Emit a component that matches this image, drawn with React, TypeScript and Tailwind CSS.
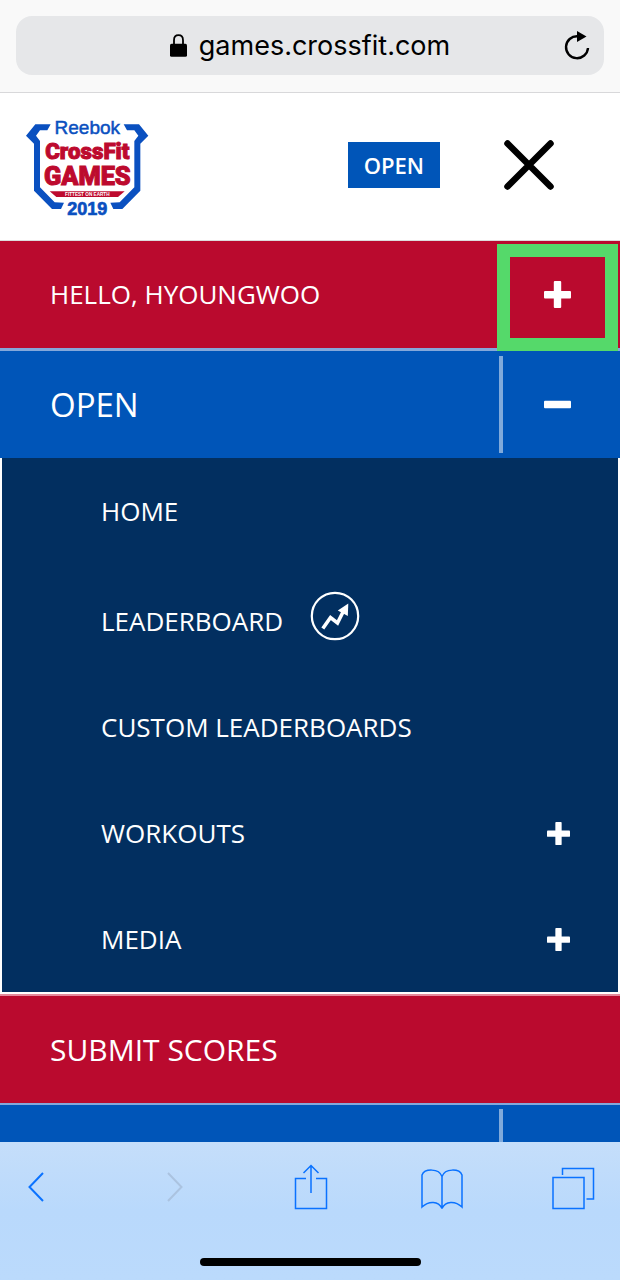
import clsx from "clsx";
import type { ReactNode } from "react";

type SubItem = {
  label: string;
  trending?: boolean;
  expandable?: boolean;
};

const SUB_ITEMS: SubItem[] = [
  { label: "HOME" },
  { label: "LEADERBOARD", trending: true },
  { label: "CUSTOM LEADERBOARDS" },
  { label: "WORKOUTS", expandable: true },
  { label: "MEDIA", expandable: true },
];

function LockIcon() {
  return (
    <svg aria-hidden="true" viewBox="0 0 17 23" className="h-[23px] w-[17px]">
      <path d="M4 11V6.2C4 3 5.8 1.2 8.5 1.2S13 3 13 6.2V11" fill="none" stroke="#000" strokeWidth="1.8" />
      <rect x="0" y="9.8" width="17" height="13" rx="1.6" />
    </svg>
  );
}

function ReloadIcon() {
  return (
    <svg aria-hidden="true" viewBox="0 0 26 29" className="h-[29px] w-[26px]">
      <path d="M13.6 5.2A11 11 0 1 0 24 17" fill="none" stroke="#000" strokeWidth="2.4" />
      <path d="M13 0l9.5 5.6L13 11z" />
    </svg>
  );
}

function GamesLogo() {
  return (
    <svg
      role="img"
      aria-label="Reebok CrossFit Games 2019"
      viewBox="48 6 369 348"
      className="h-[116px] w-[123px]"
    >
      <g fill="#0a50c0">
        <path d="M122 58H76L48 92L72 116V257L126 312H153L162 293L134 292L90 247V108L78 92L90 76H112Z" />
        <path d="M341 58H387L415 92L391 116V257L337 312H310L301 293L329 292L373 247V108L385 92L373 76H351Z" />
      </g>
      <g fontFamily="'Liberation Sans', Arial, sans-serif" textAnchor="middle">
        <text x="232" y="87" fontSize="57" fill="#0a50c0" stroke="#0a50c0" strokeWidth="1.5">
          Reebok
        </text>
        <g
          fontFamily="Roboto, 'Liberation Sans', sans-serif"
          fontWeight="900"
          fill="#bd0a2e"
          stroke="#bd0a2e"
          strokeWidth="3"
        >
          <text x="232" y="162" fontSize="67">
            CrossFit
          </text>
          <text x="232" y="240" fontSize="76">
            GAMES
          </text>
        </g>
        <path d="M119 259H344L324 276H139Z" fill="#bd0a2e" />
        <text x="232" y="272" fontSize="14" fontWeight="700" fill="#fff">
          FITTEST ON EARTH
        </text>
        <text x="232" y="331" fontSize="54" fontWeight="700" fill="#0a50c0" stroke="#0a50c0" strokeWidth="2">
          2019
        </text>
      </g>
    </svg>
  );
}

function PlusIcon({ className }: { className?: string }) {
  return (
    <svg aria-hidden="true" viewBox="0 0 27 27" fill="#fff" className={className}>
      <rect x="0" y="10" width="27" height="7.4" rx="1" />
      <rect x="9.8" y="0" width="7.4" height="27" rx="1" />
    </svg>
  );
}

function MinusIcon() {
  return (
    <svg aria-hidden="true" viewBox="0 0 27 27" fill="#fff" className="size-[27px]">
      <rect x="0" y="9.8" width="27" height="7.4" rx="1" />
    </svg>
  );
}

function TrendingIcon() {
  return (
    <svg aria-hidden="true" viewBox="0 0 50 50" className="size-[50px]">
      <circle cx="25" cy="25" r="23.2" fill="none" stroke="#fff" strokeWidth="2.2" />
      <path d="M12.8 37.5L20.5 26.5L27.500 32L33.500 20" fill="none" stroke="#fff" strokeWidth="3.600" />
      <path d="M38.3 12.5L37.8 25L27.8 19.4Z" fill="#fff" />
    </svg>
  );
}

function Row({ children, className }: { children?: ReactNode; className?: string }) {
  return <div className={clsx("flex items-stretch text-white", className)}>{children}</div>;
}

function ToolbarButton({
  label,
  disabled,
  className,
  children,
}: {
  label: string;
  disabled?: boolean;
  className: string;
  children: ReactNode;
}) {
  return (
    <button
      type="button"
      aria-label={label}
      disabled={disabled}
      className={clsx("flex h-12 items-center justify-center", className)}
    >
      {children}
    </button>
  );
}

function Toolbar() {
  return (
    <footer className="bg-linear-to-b from-[#c5defa] via-[#b9d9fc] to-[#bbdafc] px-[10px] pt-[21px] pb-[14px]">
      <div className="flex items-center justify-between pr-[15px] text-[#0a72ff]">
        <ToolbarButton label="Back" className="w-[52px]">
          <svg viewBox="0 0 16 30" className="h-[30px] w-4" fill="none" stroke="currentColor" strokeWidth="2">
            <path d="M15 1L1.5 15L15 29" />
          </svg>
        </ToolbarButton>
        <ToolbarButton label="Forward" disabled className="w-[52px] text-[#abc3e0]">
          <svg viewBox="0 0 16 30" className="h-[30px] w-4" fill="none" stroke="currentColor" strokeWidth="2">
            <path d="M1 1L14.5 15L1 29" />
          </svg>
        </ToolbarButton>
        <ToolbarButton label="Share" className="w-11">
          <svg viewBox="0 0 34 46" className="h-[46px] w-[34px]" fill="none" stroke="currentColor" strokeWidth="1.5">
            <path d="M12 14.5H1.5V44.5H32.5V14.5H22" />
            <path d="M17 29V2M9.5 9L17 1.5L24.5 9" />
          </svg>
        </ToolbarButton>
        <ToolbarButton label="Bookmarks" className="w-11">
          <svg viewBox="0 0 42 46" className="h-[46px] w-[42px]" fill="none" stroke="currentColor" strokeWidth="1.5">
            <path d="M21 44.5C17.5 37 8 36.5 1 43V11C3.5 4.5 18 4 21 12.5C24 4 38.5 4.5 41 11V43C34 36.5 24.5 37 21 44.5V12.5" />
          </svg>
        </ToolbarButton>
        <ToolbarButton label="Tabs" className="w-11">
          <svg viewBox="0 0 43 46" className="h-[46px] w-[43px]" fill="none" stroke="currentColor" strokeWidth="1.5">
            <rect x="1" y="13.5" width="31" height="31" />
            <path d="M10.5 11V4.5H41.5V35H34.5" />
          </svg>
        </ToolbarButton>
      </div>
      <div className="mx-auto mt-[47px] h-2 w-[221px] rounded-full bg-black" />
    </footer>
  );
}

export default function App() {
  return (
    <div className="flex min-h-screen flex-col bg-white font-['Open_Sans',sans-serif]">
      <div className="border-b border-[#d8d8da] bg-[#f9f9f9] px-4 pt-4 pb-[17px]">
        <div className="flex h-[59px] items-center rounded-2xl bg-[#e6e7e9] px-[14px]">
          <div className="w-[26px]" />
          <button
            type="button"
            className="flex flex-1 items-center justify-center gap-3 font-['Inter',sans-serif] text-[27px] leading-8 text-black"
          >
            <LockIcon />
            games.crossfit.com
          </button>
          <button type="button" aria-label="Reload">
            <ReloadIcon />
          </button>
        </div>
      </div>

      <header className="flex items-center border-b border-[#dcdcdc] pt-[14px] pr-[66px] pb-[17px] pl-[26px]">
        <a href="#home">
          <GamesLogo />
        </a>
        <a
          href="#open"
          className="ml-auto bg-[#0055b8] px-4 py-2 text-[22px] leading-[30px] font-semibold text-white"
        >
          OPEN
        </a>
        <button type="button" aria-label="Close menu" className="ml-16">
          <svg viewBox="0 0 50 50" className="size-[50px]" stroke="#000" strokeWidth="6.5" strokeLinecap="round">
            <path d="M3.5 3.5L46.5 46.5M46.5 3.5L3.5 46.5" />
          </svg>
        </button>
      </header>

      <nav className="flex flex-1 flex-col">
        <Row className="relative h-[107px] bg-[#ba0a2e]">
          <a href="#account" className="flex flex-1 items-center pl-[50px] text-[26px]">
            HELLO, HYOUNGWOO
          </a>
          <button
            type="button"
            aria-label="Expand account menu"
            className="absolute top-[3px] right-[2px] z-10 flex h-[107px] w-[121px] items-center justify-center border-[13px] border-[#55d96a] pb-[6px]"
          >
            <PlusIcon className="size-[27px]" />
          </button>
        </Row>

        <Row className="border-t-3 border-[#84a8da] bg-[#0055b8]">
          <a href="#open" className="flex h-[107px] flex-1 items-center pl-[50px] text-[33px]">
            OPEN
          </a>
          <button
            type="button"
            aria-label="Collapse Open menu"
            className="my-[5px] flex w-[121px] items-center justify-center border-l-4 border-[#80aadb] pr-2"
          >
            <MinusIcon />
          </button>
        </Row>

        <ul className="mx-[2px] mb-[2px] bg-[#022f60] text-[26px] leading-9 text-white">
          {SUB_ITEMS.map((item) => (
            <li
              key={item.label}
              className={clsx(
                "flex items-center justify-between pr-12 pl-[99px]",
                item.trending ? "pt-[27px] pb-[33px] leading-10" : "py-[35px]",
              )}
            >
              <a href="#submenu" className="flex items-end gap-[27px]">
                {item.label}
                {item.trending && <TrendingIcon />}
              </a>
              {item.expandable && (
                <button type="button" aria-label={`Expand ${item.label}`}>
                  <PlusIcon className="size-[23px]" />
                </button>
              )}
            </li>
          ))}
        </ul>

        <Row className="border-t-2 border-[#e58a9c] bg-[#ba0a2e]">
          <a href="#submit" className="flex h-[107px] flex-1 items-center pl-[50px] text-[30px]">
            SUBMIT SCORES
          </a>
        </Row>

        <Row className="min-h-9 flex-1 justify-end border-t-2 border-[#84a8da] bg-[#0055b8] pt-1">
          <div className="w-[121px] border-l-4 border-[#80aadb]" />
        </Row>
      </nav>

      <Toolbar />
    </div>
  );
}
